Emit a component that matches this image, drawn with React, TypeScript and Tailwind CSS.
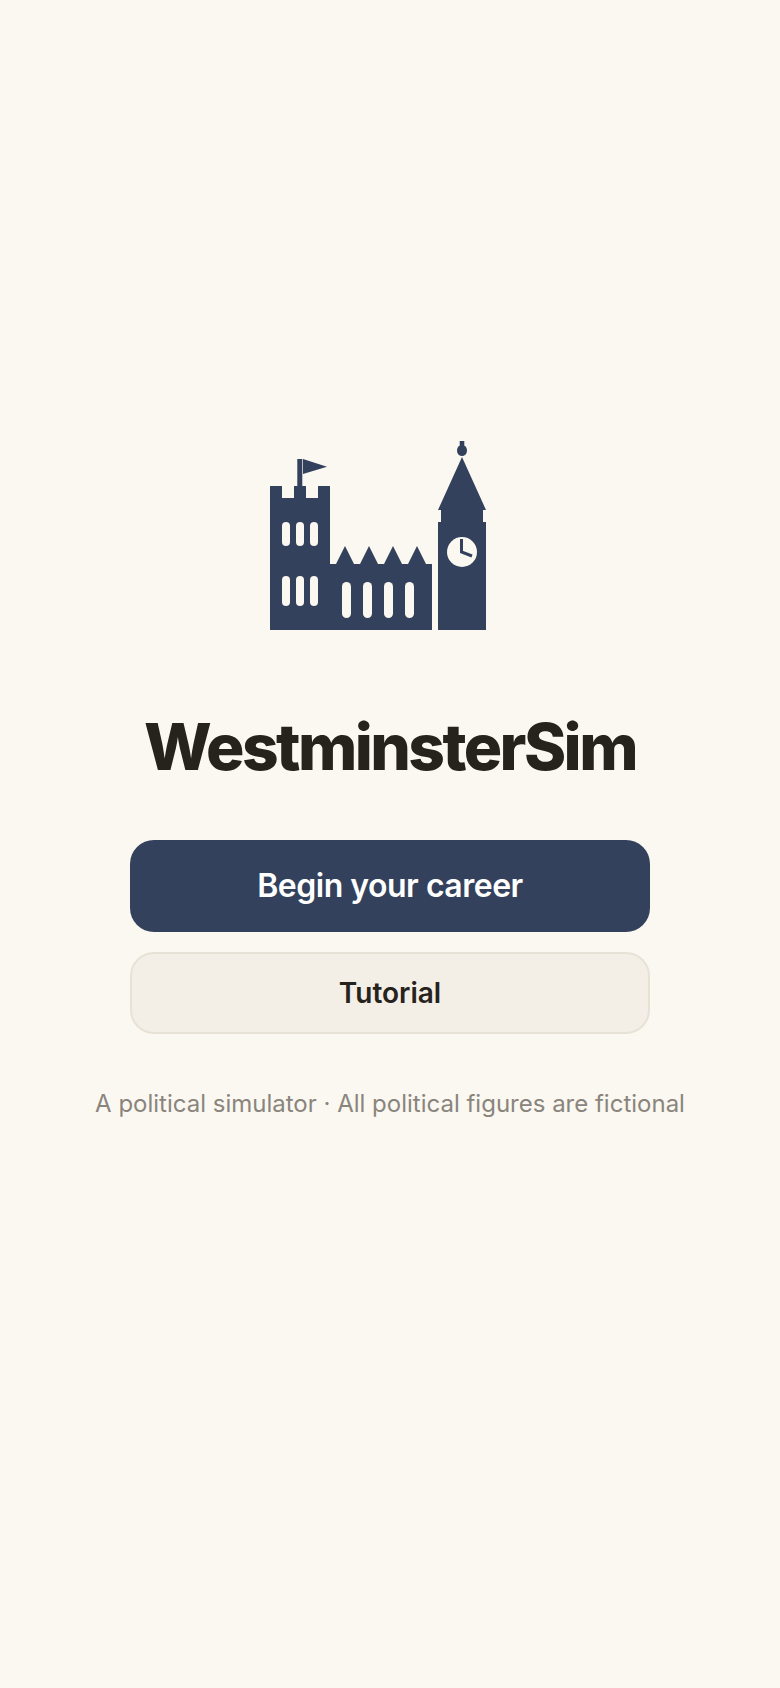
const Logo = () => (
  <svg width="260" height="210" viewBox="0 0 260 210" className="block">
    <g fill="#33415c">
      <path d="M10 200V56H22V68H34V56H46V68H58V56H70V134H76L85 116L94 134H100L109 116L118 134H124L133 116L142 134H148L157 116L166 134H172V200Z" />
      <rect x="37.3" y="29" width="5" height="27" />
      <path d="M43 29L67 36.7L43 44Z" />
      <path d="M178 200V92H181V80H178L202 27L226 80H223V92H226V200Z" />
      <ellipse cx="202" cy="20.5" rx="5" ry="5.5" />
      <rect x="199.7" y="11" width="4.6" height="6" />
    </g>
    <g fill="#fbf8f2">
      <rect x="22" y="92" width="8" height="24" rx="4" />
      <rect x="36" y="92" width="8" height="24" rx="4" />
      <rect x="50" y="92" width="8" height="24" rx="4" />
      <rect x="22" y="146" width="8" height="30" rx="4" />
      <rect x="36" y="146" width="8" height="30" rx="4" />
      <rect x="50" y="146" width="8" height="30" rx="4" />
      <rect x="82" y="152" width="9" height="36" rx="4.5" />
      <rect x="103" y="152" width="9" height="36" rx="4.5" />
      <rect x="124" y="152" width="9" height="36" rx="4.5" />
      <rect x="145" y="152" width="9" height="36" rx="4.5" />
      <circle cx="202" cy="122" r="15" />
    </g>
    <path d="M201.5 109V122L212 126" fill="none" stroke="#33415c" strokeWidth="3" />
  </svg>
)

export default function App() {
  return (
    <div className="flex min-h-[1688px] flex-col items-center bg-[#fbf8f2] pt-[430px] font-['Inter',sans-serif]">
      <Logo />
      <h1 className="mt-[68px] text-[64px] leading-[77px] font-extrabold tracking-[-2.56px] text-[#26221c]">WestminsterSim</h1>
      <div className="mt-[55px] flex w-[520px] flex-col gap-5">
        <button className="h-[92px] rounded-[24px] bg-[#33415c] text-[32px] font-semibold tracking-[-0.5px] text-white">Begin your career</button>
        <button className="h-[82px] rounded-[24px] border-2 border-[#e8e2d6] bg-[#f3eee6] text-[28px] font-semibold text-[#26221c]">Tutorial</button>
      </div>
      <p className="mt-[54px] text-[24px] leading-[32px] text-[#8a857c]">A political simulator · All political figures are fictional</p>
    </div>
  )
}
